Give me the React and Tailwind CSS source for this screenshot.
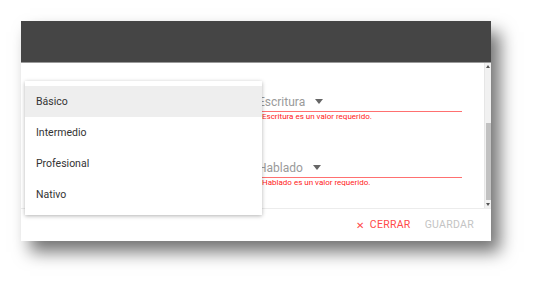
import React from "react";

const levels = ["Básico", "Intermedio", "Profesional", "Nativo"];

function Caret({ className }) {
  return (
    <svg width="8" height="5" viewBox="0 0 8 5" className={className}>
      <path d="M0 0h8L4 5z" fill="#666" />
    </svg>
  );
}

function SelectField({ label, caretGap }) {
  return (
    <div className="w-[200px]">
      <div className="h-[20px] flex items-center border-b border-[#ff7070]">
        <span className="-ml-[4px] text-[12px] text-[#9a9a9a]">{label}</span>
        <Caret className={caretGap} />
      </div>
      <div className="text-[8px] leading-[9px] text-[#ff1a1a]">
        {label} es un valor requerido.
      </div>
    </div>
  );
}

function Scrollbar() {
  return (
    <div className="w-[7px] h-full flex flex-col bg-[#f1f1f1] border-l border-[#e6e6e6]">
      <div className="h-[7px] flex items-center justify-center">
        <svg width="4" height="3" viewBox="0 0 4 3">
          <path d="M0 3h4L2 0z" fill="#555" />
        </svg>
      </div>
      <div className="flex-1 px-[0.5px]">
        <div className="mt-[53px] h-[77px] bg-[#c1c1c1]" />
      </div>
      <div className="h-[7px] flex items-center justify-center">
        <svg width="4" height="3" viewBox="0 0 4 3">
          <path d="M0 0h4L2 3z" fill="#555" />
        </svg>
      </div>
    </div>
  );
}

function App() {
  return (
    <div
      className="w-[533px] h-[283px] bg-white pt-[21px] pl-[21px]"
      style={{ fontFamily: "Roboto, 'Liberation Sans', sans-serif" }}
    >
      <div className="relative w-[470px] h-[220px] bg-white flex flex-col shadow-[9px_11px_16px_rgba(0,0,0,0.55)]">
        <div className="h-[42px] bg-[#454545] border-b border-[#9a9a9a]" />
        <div className="h-[146px] flex border-b border-[#ececec]">
          <div className="flex-1 pl-[241px] pt-[29px] flex flex-col gap-[37px]">
            <SelectField label="Escritura" caretGap="ml-[10px]" />
            <SelectField label="Hablado" caretGap="ml-[10px]" />
          </div>
          <Scrollbar />
        </div>
        <div className="flex-1 flex items-center justify-end gap-[14px] pr-[17px] text-[10.5px] tracking-[0.3px]">
          <button type="button" className="flex items-center gap-[5px] text-[#ff4a4a]">
            <span className="text-[10px]">✕</span>
            CERRAR
          </button>
          <button type="button" className="text-[#c4c4c4]">
            GUARDAR
          </button>
        </div>

        <div className="absolute left-[4px] top-[60px] w-[237px] py-[5px] bg-white shadow-[0_1px_4px_rgba(0,0,0,0.3)]">
          {levels.map((level, i) => (
            <div
              key={level}
              className={
                i === 0
                  ? "h-[31px] flex items-center pl-[11px] text-[10.5px] text-[#333] bg-[#eeeeee]"
                  : "h-[31px] flex items-center pl-[11px] text-[10.5px] text-[#333]"
              }
            >
              {level}
            </div>
          ))}
        </div>
      </div>
    </div>
  );
}

export default App;
